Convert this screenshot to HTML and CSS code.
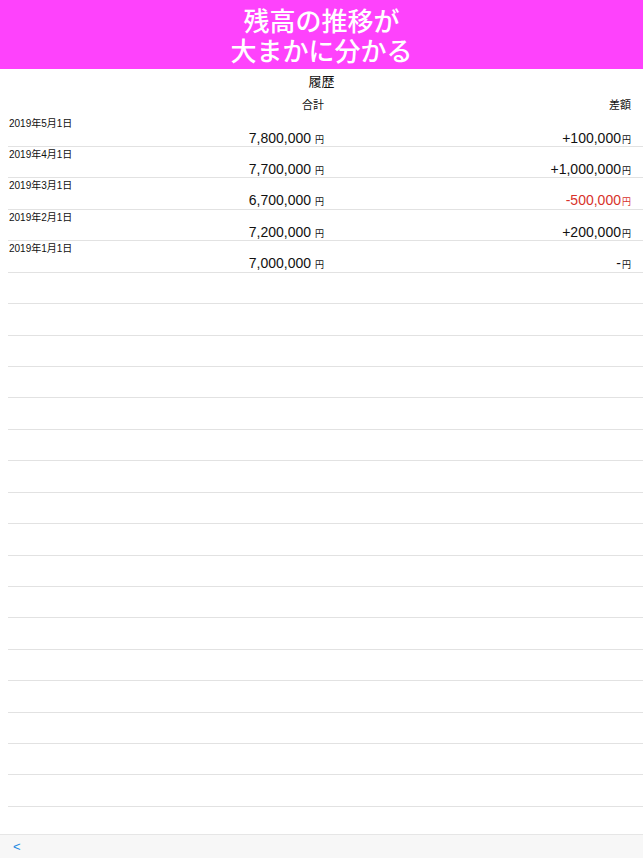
FILE: index.html
```html
<!DOCTYPE html>
<html lang="ja">
<head>
    <meta charset="UTF-8">
    <meta name="viewport" content="width=device-width, initial-scale=1.0">
    <title>履歴</title>
    <link rel="stylesheet" href="styles.css">
</head>
<body>
    <div class="screen">
        <header class="banner">
            <div class="banner-line">残高の推移が</div>
            <div class="banner-line">大まかに分かる</div>
        </header>

        <div class="title">履歴</div>

        <div class="col-head">
            <span>合計</span>
            <span>差額</span>
        </div>

        <div class="list">
            <div class="row">
                <div class="date">2019年5月1日</div>
                <div class="total">7,800,000 <small>円</small></div>
                <div class="diff">+100,000<small>円</small></div>
            </div>
            <div class="row">
                <div class="date">2019年4月1日</div>
                <div class="total">7,700,000 <small>円</small></div>
                <div class="diff">+1,000,000<small>円</small></div>
            </div>
            <div class="row">
                <div class="date">2019年3月1日</div>
                <div class="total">6,700,000 <small>円</small></div>
                <div class="diff minus">-500,000<small>円</small></div>
            </div>
            <div class="row">
                <div class="date">2019年2月1日</div>
                <div class="total">7,200,000 <small>円</small></div>
                <div class="diff">+200,000<small>円</small></div>
            </div>
            <div class="row">
                <div class="date">2019年1月1日</div>
                <div class="total">7,000,000 <small>円</small></div>
                <div class="diff">-<small>円</small></div>
            </div>

            <div class="row empty"></div>
            <div class="row empty"></div>
            <div class="row empty"></div>
            <div class="row empty"></div>
            <div class="row empty"></div>
            <div class="row empty"></div>
            <div class="row empty"></div>
            <div class="row empty"></div>
            <div class="row empty"></div>
            <div class="row empty"></div>
            <div class="row empty"></div>
            <div class="row empty"></div>
            <div class="row empty"></div>
            <div class="row empty"></div>
            <div class="row empty"></div>
            <div class="row empty"></div>
            <div class="row empty"></div>
        </div>

        <footer class="toolbar">
            <span class="back">&lt;</span>
        </footer>
    </div>
</body>
</html>
```

FILE: styles.css
```css
body {
    margin: 0;
    font-family: "Liberation Sans", "Noto Sans CJK JP", sans-serif;
    color: #111;
    background-color: #fff;
}

.screen {
    display: flex;
    flex-direction: column;
    height: 100vh;
    overflow: hidden;
}

.banner {
    height: 69px;
    background-color: #fe42fc;
    color: #fff;
    font-family: "Noto Sans CJK JP", sans-serif;
    font-weight: 500;
    font-size: 26px;
    display: flex;
    flex-direction: column;
    align-items: center;
    justify-content: center;
    flex-shrink: 0;
}

.banner-line {
    height: 30px;
    line-height: 30px;
}

.title {
    height: 24px;
    line-height: 24px;
    text-align: center;
    font-family: "Noto Sans CJK JP", sans-serif;
    font-size: 13px;
    flex-shrink: 0;
}

.col-head {
    display: grid;
    grid-template-columns: 315px 1fr;
    height: 22.6px;
    line-height: 22.6px;
    padding: 0 12px 0 9px;
    font-family: "Noto Sans CJK JP", sans-serif;
    font-size: 11px;
    text-align: right;
    flex-shrink: 0;
}

.list {
    flex: 1;
    overflow: hidden;
}

.row {
    display: grid;
    grid-template-columns: 315px 1fr;
    grid-template-rows: 14px 1fr;
    height: 31.43px;
    box-sizing: border-box;
    margin-left: 8px;
    padding: 1px 12px 0 1px;
    border-bottom: 1px solid #e2e2e2;
}

.date {
    grid-column: 1 / 3;
    font-size: 10px;
    line-height: 13px;
}

.total,
.diff {
    text-align: right;
    font-size: 14px;
    line-height: 14px;
}

.total small,
.diff small {
    font-family: "Noto Sans CJK JP", sans-serif;
    font-size: 9px;
}

.diff small {
    margin-left: 1px;
}

.minus {
    color: #d8322b;
}

.toolbar {
    height: 24px;
    flex-shrink: 0;
    background-color: #f7f7f7;
    border-top: 1px solid #e6e6e6;
    box-sizing: border-box;
    padding-left: 13px;
    line-height: 22px;
}

.back {
    color: #1e8ae2;
    font-size: 13px;
}
```
